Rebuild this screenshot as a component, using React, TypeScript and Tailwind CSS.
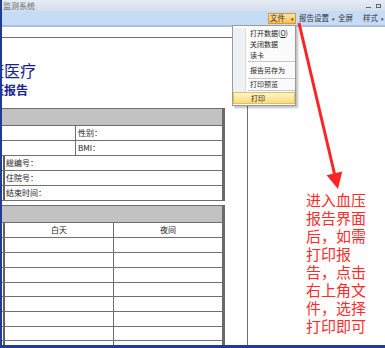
import React from "react";

const cjk = { fontFamily: '"Noto Sans CJK SC", "Noto Sans", sans-serif' };

function MenuItem({ label, h, hl }: { label: React.ReactNode; h: string; hl?: boolean }) {
  return (
    <div className={`flex items-center ${h} ${hl ? "bg-[linear-gradient(#fff6c8,#f6dc7a)] border border-[#e2c060]" : ""}`}>
      <div className={`w-[13px] self-stretch ${hl ? "" : "bg-[#eef0f2] border-r border-[#dcdcdc]"}`} />
      <div className="pl-[4px] text-[7px] leading-none text-[#222]">{label}</div>
    </div>
  );
}

function Sep() {
  return (
    <div className="flex h-[3px] items-center">
      <div className="w-[13px] self-stretch bg-[#eef0f2] border-r border-[#dcdcdc]" />
      <div className="h-px flex-1 bg-[#c8c8c8] ml-[2px]" />
    </div>
  );
}

export default function App() {
  const rows2 = [15, 15, 15, 14, 15, 15, 14, 14];
  return (
    <div
      className="relative w-[385px] h-[348px] overflow-hidden bg-white border-l-[2px] border-b-[3px] border-[#1e3c96] flex flex-col"
      style={cjk}
    >
      {/* title bar */}
      <div className="h-[11px] flex items-center justify-between bg-[linear-gradient(#e6edf5,#d4dfec)] pl-[1px] pr-[4px]">
        <span className="text-[8px] leading-none text-[#6c6c6c]">监测系统</span>
        <div className="flex items-center gap-[5px] text-[#555]">
          <div className="w-[5px] h-px bg-[#666] mt-[3px]" />
          <div className="w-[5px] h-[4px] border border-[#666]" />
        </div>
      </div>
      {/* toolbar */}
      <div className="h-[16px] flex items-center bg-[#c6dbf6] border-b-[2px] border-[#a9bfdc] pl-[266px] text-[7.5px] text-[#333]">
        <div className="flex items-center h-[11px] px-[1px] bg-[linear-gradient(#fde6a0,#f5bf52)] border border-[#d69a30] w-[28px]">
          <span className="leading-none">文件</span>
          <span className="ml-auto text-[5px] leading-none">▾</span>
        </div>
        <span className="ml-[3px] leading-none">报告设置</span>
        <span className="ml-[3px] text-[5px] leading-none">▾</span>
        <span className="ml-[3px] leading-none">全屏</span>
        <span className="ml-[10px] leading-none">样式</span>
        <span className="ml-[3px] text-[5px] leading-none">▾</span>
      </div>
      <div className="h-[10px]" />
      {/* main */}
      <div className="flex flex-1 min-h-0">
        <div className="w-[246px] border-t border-r border-[#707070] overflow-hidden relative">
          <div className="w-[225px] ml-[-2px]">
            {/* title */}
            <div className="mt-[23px] h-[18px] flex ml-[-12px] text-[16px] leading-[18px] text-[#1a1f8f] whitespace-nowrap">
              康医疗
            </div>
            <div className="mt-[4px] h-[13px] flex ml-[-8px] text-[12px] leading-[13px] font-bold text-[#1a2490] whitespace-nowrap">
              压报告
            </div>
            {/* table 1 */}
            <div className="mt-[12px] border-r-[3px] border-[#6a6a6a] text-[8px] text-[#222]">
              <div className="h-[18px] bg-[#c2c2c2] border-t border-b border-[#6e6e6e]" />
              <div className="flex h-[15px] border-b border-[#707070]">
                <div className="w-[76px] border-r border-[#707070]" />
                <div className="pl-[2px] leading-[14px]">性别：</div>
              </div>
              <div className="flex h-[15px] border-b border-[#707070]">
                <div className="w-[76px] border-r border-[#707070]" />
                <div className="pl-[2px] leading-[14px]">BMI：</div>
              </div>
              {["総编号：", "住院号：", "结束时间："].map((t) => (
                <div key={t} className="flex h-[15px] border-b border-[#707070]">
                  <div className="w-[5px] border-r-[2px] border-[#606060]" />
                  <div className="pl-[1px] leading-[14px]">{t}</div>
                </div>
              ))}
            </div>
            {/* table 2 */}
            <div className="mt-[4px] border-r-[3px] border-[#6a6a6a] text-[8px] text-[#222]">
              <div className="h-[18px] bg-[#c2c2c2] border-t border-b border-[#6e6e6e]" />
              <div className="flex h-[15px] border-b border-[#707070]">
                <div className="w-[5px] border-r-[2px] border-[#606060]" />
                <div className="w-[109px] border-r border-[#707070] text-center leading-[14px]">白天</div>
                <div className="flex-1 text-center leading-[14px]">夜间</div>
              </div>
              {rows2.map((h, i) => (
                <div key={i} className="flex border-b border-[#707070]" style={{ height: h }}>
                  <div className="w-[5px] border-r-[2px] border-[#606060]" />
                  <div className="w-[109px] border-r border-[#707070]" />
                  <div className="flex-1" />
                </div>
              ))}
            </div>
          </div>
        </div>
        <div className="flex-1" />
      </div>

      {/* dropdown menu */}
      <div className="absolute left-[230px] top-[25px] w-[64px] bg-[#fbfbfb] border border-[#9a9a9a] shadow-[2px_2px_2px_rgba(0,0,0,0.25)] pt-[2px] pb-[1px]">
        <MenuItem h="h-[11px]" label={<span>打开数据(<u>O</u>)</span>} />
        <MenuItem h="h-[11px]" label="关闭数据" />
        <MenuItem h="h-[10px]" label="读卡" />
        <Sep />
        <MenuItem h="h-[14px]" label="报告另存为" />
        <Sep />
        <MenuItem h="h-[9px]" label="打印预览" />
        <Sep />
        <MenuItem h="h-[12px]" label="打印" hl />
      </div>

      {/* red arrow */}
      <svg className="absolute left-0 top-0" width="385" height="348" viewBox="0 0 385 348">
        <line x1="297" y1="23" x2="333" y2="176" stroke="#ff2424" strokeWidth="3" />
        <polygon points="324.6,175.2 340.2,171.6 336,189" fill="#ff2424" />
      </svg>

      {/* annotation */}
      <div className="absolute left-[304px] top-[191px] text-[15px] leading-[18px] text-[#ff2a2a]">
        <div>进入血压</div>
        <div>报告界面</div>
        <div>后，如需</div>
        <div>打印报</div>
        <div>告，点击</div>
        <div>右上角文</div>
        <div>件，选择</div>
        <div>打印即可</div>
      </div>
    </div>
  );
}
